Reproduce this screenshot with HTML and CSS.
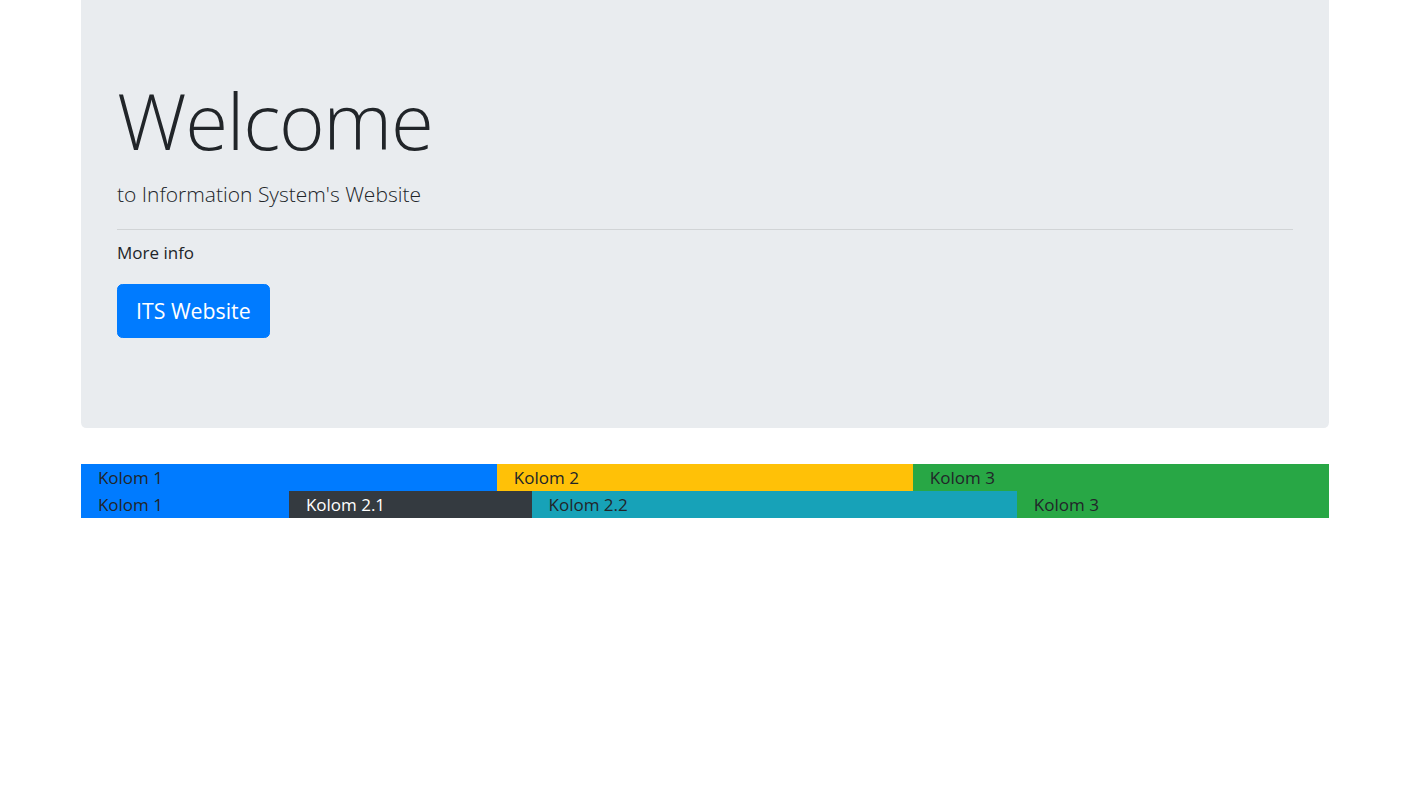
FILE: index.html
```html
<!DOCTYPE html>
<html lang="en">
<head>
<meta charset="utf-8">
<title>Welcome</title>
<link rel="stylesheet" href="styles.css">
</head>
<body>
<div class="container">
  <div class="jumbotron">
    <h1 class="display">Welcome</h1>
    <p class="lead">to Information System's Website</p>
    <hr class="divider">
    <p class="info">More info</p>
    <div class="actions"><a class="btn" href="#">ITS Website</a></div>
  </div>

  <div class="row">
    <div class="col col-4 bg-primary">Kolom 1</div>
    <div class="col col-4 bg-warning">Kolom 2</div>
    <div class="col col-4 bg-success">Kolom 3</div>
  </div>
  <div class="row">
    <div class="col col-2 bg-primary">Kolom 1</div>
    <div class="col-7">
      <div class="row">
        <div class="col col-n4 bg-dark">Kolom 2.1</div>
        <div class="col col-n8 bg-info">Kolom 2.2</div>
      </div>
    </div>
    <div class="col col-3 bg-success">Kolom 3</div>
  </div>
</div>
</body>
</html>
```

FILE: styles.css
```css
* { box-sizing: border-box; }
html, body { margin: 0; padding: 0; }
body {
  font-family: "Open Sans", "Noto Sans", "Liberation Sans", sans-serif;
  font-size: 17px;
  line-height: 27px;
  color: #212529;
  background: #fff;
}
.container {
  width: 1282px;
  margin: 0 auto;
  padding: 0 18px 0 16px;
}
.jumbotron {
  background: #e9ecef;
  border-radius: 0 0 5.4px 5.4px;
  padding: 72px 36px;
  margin-bottom: 36px;
}
.display {
  margin: 0 0 9px;
  font-size: 78px;
  font-weight: 300;
  line-height: 97.2px;
  letter-spacing: -1.3px;
}
.lead {
  margin: 0;
  font-size: 21px;
  font-weight: 300;
  line-height: 33.75px;
}
.divider {
  margin: 17px 0 9px;
  border: 0;
  border-top: 1px solid rgba(0,0,0,.1);
  height: 0;
}
.info {
  margin: 0 0 18px;
  font-size: 17px;
  line-height: 27px;
}
.actions {
  display: flex;
  margin-bottom: 18px;
}
.btn {
  display: inline-block;
  background: #007bff;
  color: #fff;
  text-decoration: none;
  border: 1px solid #007bff;
  border-radius: 5.4px;
  padding: 9px 18px;
  font-size: 21.3px;
  line-height: 33.75px;
  font-weight: 400;
}
.row {
  display: flex;
}
.col {
  padding: 0 16.875px;
  line-height: 27px;
  font-size: 17px;
}
.col-4 { width: 33.3333%; }
.col-2 { width: 16.6667%; }
.col-7 { width: 58.3333%; }
.col-3 { width: 25%; }
.col-n4 { width: 33.3333%; }
.col-n8 { width: 66.6667%; }
.bg-primary { background: #007bff; }
.bg-warning { background: #ffc107; }
.bg-success { background: #28a745; }
.bg-dark { background: #343a40; color: #fff; }
.bg-info { background: #17a2b8; }
```
